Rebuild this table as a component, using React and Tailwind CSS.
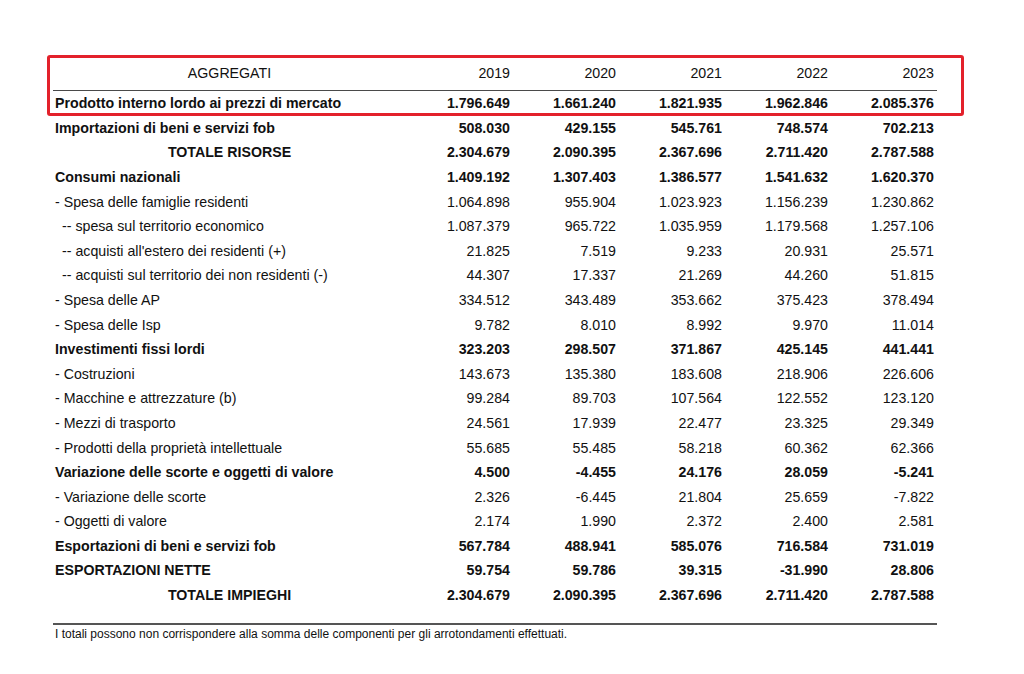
// App.jsx
const ROWS = [
  { label: "Prodotto interno lordo ai prezzi di mercato", bold: true, v: ["1.796.649", "1.661.240", "1.821.935", "1.962.846", "2.085.376"] },
  { label: "Importazioni di beni e servizi fob", bold: true, v: ["508.030", "429.155", "545.761", "748.574", "702.213"] },
  { label: "TOTALE RISORSE", bold: true, center: true, v: ["2.304.679", "2.090.395", "2.367.696", "2.711.420", "2.787.588"] },
  { label: "Consumi nazionali", bold: true, v: ["1.409.192", "1.307.403", "1.386.577", "1.541.632", "1.620.370"] },
  { label: "- Spesa delle famiglie residenti", v: ["1.064.898", "955.904", "1.023.923", "1.156.239", "1.230.862"] },
  { label: "-- spesa sul territorio economico", indent: true, v: ["1.087.379", "965.722", "1.035.959", "1.179.568", "1.257.106"] },
  { label: "-- acquisti all'estero dei residenti (+)", indent: true, v: ["21.825", "7.519", "9.233", "20.931", "25.571"] },
  { label: "-- acquisti sul territorio dei non residenti (-)", indent: true, v: ["44.307", "17.337", "21.269", "44.260", "51.815"] },
  { label: "- Spesa delle AP", v: ["334.512", "343.489", "353.662", "375.423", "378.494"] },
  { label: "- Spesa delle Isp", v: ["9.782", "8.010", "8.992", "9.970", "11.014"] },
  { label: "Investimenti fissi lordi", bold: true, v: ["323.203", "298.507", "371.867", "425.145", "441.441"] },
  { label: "- Costruzioni", v: ["143.673", "135.380", "183.608", "218.906", "226.606"] },
  { label: "- Macchine e attrezzature (b)", v: ["99.284", "89.703", "107.564", "122.552", "123.120"] },
  { label: "- Mezzi di trasporto", v: ["24.561", "17.939", "22.477", "23.325", "29.349"] },
  { label: "- Prodotti della proprietà intellettuale", v: ["55.685", "55.485", "58.218", "60.362", "62.366"] },
  { label: "Variazione delle scorte e oggetti di valore", bold: true, v: ["4.500", "-4.455", "24.176", "28.059", "-5.241"] },
  { label: "- Variazione delle scorte", v: ["2.326", "-6.445", "21.804", "25.659", "-7.822"] },
  { label: "- Oggetti di valore", v: ["2.174", "1.990", "2.372", "2.400", "2.581"] },
  { label: "Esportazioni di beni e servizi fob", bold: true, v: ["567.784", "488.941", "585.076", "716.584", "731.019"] },
  { label: "ESPORTAZIONI NETTE", bold: true, v: ["59.754", "59.786", "39.315", "-31.990", "28.806"] },
  { label: "TOTALE IMPIEGHI", bold: true, center: true, v: ["2.304.679", "2.090.395", "2.367.696", "2.711.420", "2.787.588"] },
];

const YEARS = ["2019", "2020", "2021", "2022", "2023"];
const GRID = "grid grid-cols-[349px_repeat(5,106px)] items-center";

export default function App() {
  return (
    <div className="min-h-[674px] w-[1024px] bg-white text-[#111111] font-['Liberation_Sans',Arial,sans-serif]">
      <div className="relative pt-[60px] pl-[53px]">
        {/* red highlight around header + first row */}
        <div className="absolute left-[47px] top-[55px] w-[917px] h-[61px] border-[3px] border-[#e3212b] rounded-[3px]" />

        <div className="w-[884px]">
          {/* header */}
          <div className={GRID + " h-[26px] pl-[2px] text-[14.2px] leading-none"}>
            <div className="text-center">AGGREGATI</div>
            {YEARS.map((y) => (
              <div key={y} className="text-right">{y}</div>
            ))}
          </div>
          <div className="mt-[4px] h-px bg-[#4a4a4a]" />

          {/* body */}
          <div className="pl-[2px]">
            {ROWS.map((r) => (
              <div
                key={r.label}
                className={GRID + " h-[24.6px] text-[14.2px] leading-none " + (r.bold ? "font-bold" : "")}
              >
                <div className={(r.center ? "text-center" : "") + (r.indent ? " pl-[7px]" : "")}>{r.label}</div>
                {r.v.map((n, i) => (
                  <div key={i} className="text-right">{n}</div>
                ))}
              </div>
            ))}
          </div>

          {/* footnote */}
          <div className="mt-[16px] h-[2px] bg-[#555555]" />
          <p className="mt-[2px] pl-[2px] text-[12px] leading-[14px]">
            I totali possono non corrispondere alla somma delle componenti per gli arrotondamenti effettuati.
          </p>
        </div>
      </div>
    </div>
  );
}
